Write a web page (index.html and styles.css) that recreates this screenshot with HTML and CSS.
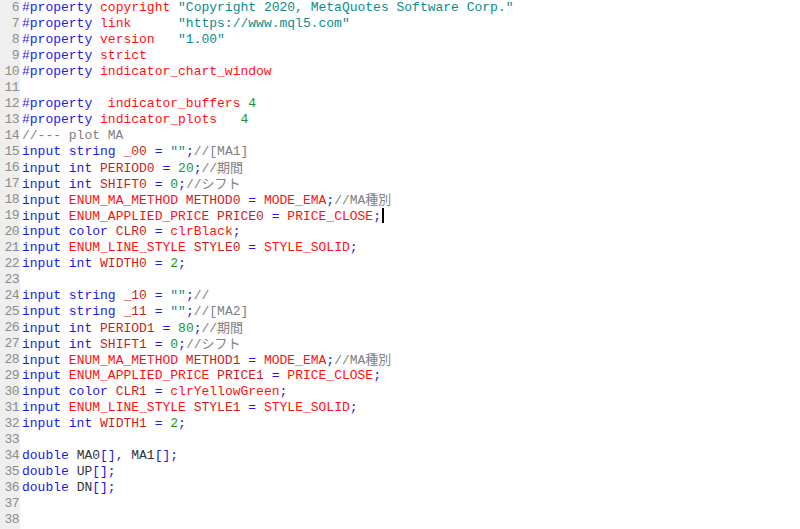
FILE: index.html
```html
<!DOCTYPE html>
<html lang="ja">
<head>
    <meta charset="UTF-8">
    <meta name="viewport" content="width=device-width, initial-scale=1.0">
    <title>MetaEditor</title>
    <link rel="stylesheet" href="styles.css">
</head>
<body>
    <div class="editor">
        <div class="gutter">
            <div>6</div><div>7</div><div>8</div><div>9</div><div>10</div>
            <div>11</div><div>12</div><div>13</div><div>14</div><div>15</div>
            <div>16</div><div>17</div><div>18</div><div>19</div><div>20</div>
            <div>21</div><div>22</div><div>23</div><div>24</div><div>25</div>
            <div>26</div><div>27</div><div>28</div><div>29</div><div>30</div>
            <div>31</div><div>32</div><div>33</div><div>34</div><div>35</div>
            <div>36</div><div>37</div><div>38</div>
        </div>

        <div class="code">
<div class="line"><span class="kw">#property</span> <span class="en">copyright</span> <span class="str">"Copyright 2020, MetaQuotes Software Corp."</span></div>
<div class="line"><span class="kw">#property</span> <span class="en">link</span>      <span class="str">"https://www.mql5.com"</span></div>
<div class="line"><span class="kw">#property</span> <span class="en">version</span>   <span class="str">"1.00"</span></div>
<div class="line"><span class="kw">#property</span> <span class="en">strict</span></div>
<div class="line"><span class="kw">#property</span> <span class="en">indicator_chart_window</span></div>
<div class="line"> </div>
<div class="line"><span class="kw">#property</span>  <span class="en">indicator_buffers</span> <span class="num">4</span></div>
<div class="line"><span class="kw">#property</span> <span class="en">indicator_plots</span>   <span class="num">4</span></div>
<div class="line"><span class="cm">//--- plot MA</span></div>
<div class="line"><span class="kw">input string</span> <span class="var">_00</span> <span class="op">=</span> <span class="str">""</span><span class="op">;</span><span class="cm">//[MA1]</span></div>
<div class="line"><span class="kw">input int</span> <span class="var">PERIOD0</span> <span class="op">=</span> <span class="num">20</span><span class="op">;</span><span class="cm">//<span class="jp">期間</span></span></div>
<div class="line"><span class="kw">input int</span> <span class="var">SHIFT0</span> <span class="op">=</span> <span class="num">0</span><span class="op">;</span><span class="cm">//<span class="jp">シフト</span></span></div>
<div class="line"><span class="kw">input</span> <span class="en">ENUM_MA_METHOD</span> <span class="var">METHOD0</span> <span class="op">=</span> <span class="en">MODE_EMA</span><span class="op">;</span><span class="cm">//MA<span class="jp">種別</span></span></div>
<div class="line"><span class="kw">input</span> <span class="en">ENUM_APPLIED_PRICE</span> <span class="var">PRICE0</span> <span class="op">=</span> <span class="en">PRICE_CLOSE</span><span class="op">;</span><span class="caret"></span></div>
<div class="line"><span class="kw">input color</span> <span class="var">CLR0</span> <span class="op">=</span> <span class="en">clrBlack</span><span class="op">;</span></div>
<div class="line"><span class="kw">input</span> <span class="en">ENUM_LINE_STYLE</span> <span class="var">STYLE0</span> <span class="op">=</span> <span class="en">STYLE_SOLID</span><span class="op">;</span></div>
<div class="line"><span class="kw">input int</span> <span class="var">WIDTH0</span> <span class="op">=</span> <span class="num">2</span><span class="op">;</span></div>
<div class="line"> </div>
<div class="line"><span class="kw">input string</span> <span class="var">_10</span> <span class="op">=</span> <span class="str">""</span><span class="op">;</span><span class="cm">//</span></div>
<div class="line"><span class="kw">input string</span> <span class="var">_11</span> <span class="op">=</span> <span class="str">""</span><span class="op">;</span><span class="cm">//[MA2]</span></div>
<div class="line"><span class="kw">input int</span> <span class="var">PERIOD1</span> <span class="op">=</span> <span class="num">80</span><span class="op">;</span><span class="cm">//<span class="jp">期間</span></span></div>
<div class="line"><span class="kw">input int</span> <span class="var">SHIFT1</span> <span class="op">=</span> <span class="num">0</span><span class="op">;</span><span class="cm">//<span class="jp">シフト</span></span></div>
<div class="line"><span class="kw">input</span> <span class="en">ENUM_MA_METHOD</span> <span class="var">METHOD1</span> <span class="op">=</span> <span class="en">MODE_EMA</span><span class="op">;</span><span class="cm">//MA<span class="jp">種別</span></span></div>
<div class="line"><span class="kw">input</span> <span class="en">ENUM_APPLIED_PRICE</span> <span class="var">PRICE1</span> <span class="op">=</span> <span class="en">PRICE_CLOSE</span><span class="op">;</span></div>
<div class="line"><span class="kw">input color</span> <span class="var">CLR1</span> <span class="op">=</span> <span class="en">clrYellowGreen</span><span class="op">;</span></div>
<div class="line"><span class="kw">input</span> <span class="en">ENUM_LINE_STYLE</span> <span class="var">STYLE1</span> <span class="op">=</span> <span class="en">STYLE_SOLID</span><span class="op">;</span></div>
<div class="line"><span class="kw">input int</span> <span class="var">WIDTH1</span> <span class="op">=</span> <span class="num">2</span><span class="op">;</span></div>
<div class="line"> </div>
<div class="line"><span class="kw">double</span> <span class="id">MA0</span><span class="op">[],</span> <span class="id">MA1</span><span class="op">[];</span></div>
<div class="line"><span class="kw">double</span> <span class="id">UP</span><span class="op">[];</span></div>
<div class="line"><span class="kw">double</span> <span class="id">DN</span><span class="op">[];</span></div>
<div class="line"> </div>
<div class="line"> </div>
        </div>
    </div>
</body>
</html>
```

FILE: styles.css
```css
*{
    margin: 0px;
    padding: 0px;
    box-sizing: border-box;
}

body{
    background-color: white;
    font-family: "Liberation Mono", "Courier New", monospace;
    font-size: 13px;
}

.editor{
    display: flex;
    height: 100vh;
    overflow: hidden;
}

.gutter{
    width: 20px;
    background-color: #efefef;
    color: #8c8c8c;
    text-align: right;
    padding-right: 1px;
    letter-spacing: -0.5px;
}

.gutter div , .line{
    height: 16px;
    line-height: 16px;
}

.code{
    padding-left: 2px;
}

.line{
    white-space: pre;
}

.kw{ color: #1a1ae6; }
.en{ color: #ff1010; }
.var{ color: #c81e1e; }
.id{ color: #333333; }
.str{ color: #0a8c8c; }
.num{ color: #1e961e; }
.op{ color: #1a1ae6; }
.cm{ color: #808080; }

.jp{
    font-family: "Noto Sans CJK JP", sans-serif;
    font-size: 13px;
    line-height: 1;
}

.caret{
    display: inline-block;
    width: 2px;
    height: 15px;
    background-color: black;
    vertical-align: -3px;
    margin-left: 1px;
}
```
